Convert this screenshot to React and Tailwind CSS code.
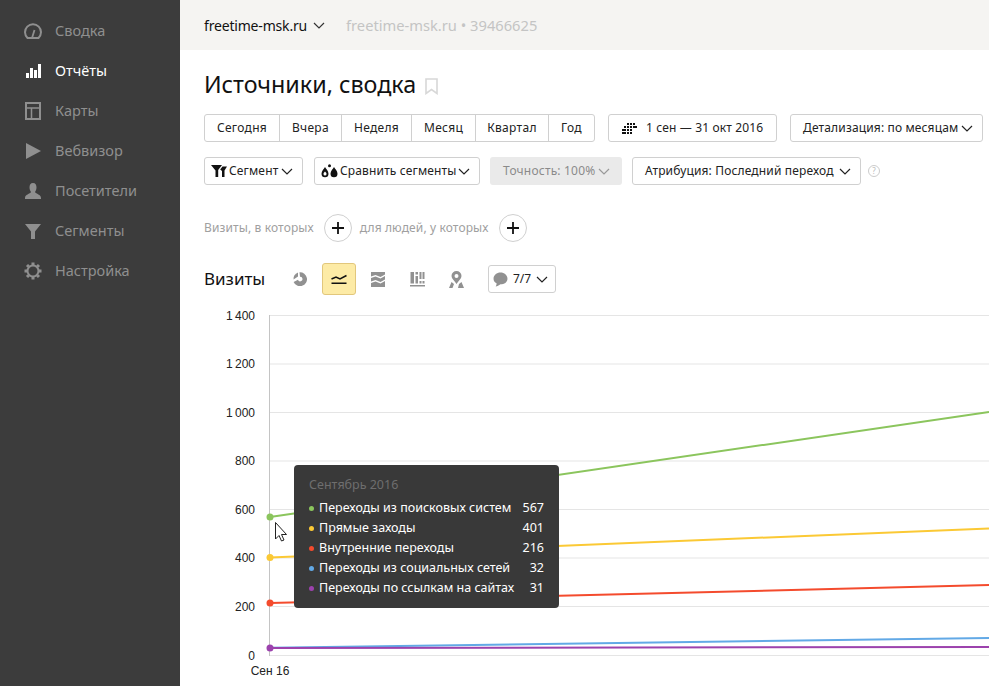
import React from "react";

const NAV = [
  { label: "Сводка", icon: "gauge" },
  { label: "Отчёты", icon: "bars", active: true },
  { label: "Карты", icon: "map" },
  { label: "Вебвизор", icon: "play" },
  { label: "Посетители", icon: "user" },
  { label: "Сегменты", icon: "funnel" },
  { label: "Настройка", icon: "gear" },
];

const PERIODS = [
  { label: "Сегодня", width: "w-[75px]" },
  { label: "Вчера", width: "w-[62px]" },
  { label: "Неделя", width: "w-[70px]" },
  { label: "Месяц", width: "w-[64px]" },
  { label: "Квартал", width: "w-[73px]" },
  { label: "Год", width: "w-[45px]" },
];

const ROWS = [
  { name: "Переходы из поисковых систем", value: 567, color: "bg-[#8bc55d]" },
  { name: "Прямые заходы", value: 401, color: "bg-[#fbc935]" },
  { name: "Внутренние переходы", value: 216, color: "bg-[#f44b2d]" },
  { name: "Переходы из социальных сетей", value: 32, color: "bg-[#62a9e6]" },
  { name: "Переходы по ссылкам на сайтах", value: 31, color: "bg-[#9c42ad]" },
];

const TICKS = [
  { label: "1\u2009400", y: 9.5 },
  { label: "1\u2009200", y: 58 },
  { label: "1\u2009000", y: 106.5 },
  { label: "800", y: 155 },
  { label: "600", y: 203.5 },
  { label: "400", y: 252 },
  { label: "200", y: 300.5 },
  { label: "0", y: 349.5 },
];

const NavIcon = ({ name }) => {
  const c = "currentColor";
  if (name === "gauge")
    return (
      <svg width="18" height="16" viewBox="0 0 18 16" fill="none">
        <path d="M3.500 15A8 8 0 1 1 14.500 15Z" stroke={c} strokeWidth="2" strokeLinejoin="round" />
        <path d="M8 15 L10.500 7" stroke={c} strokeWidth="1.800" />
      </svg>
    );
  if (name === "bars")
    return (
      <svg width="15" height="14" viewBox="0 0 15 14" fill={c}>
        <rect x="0" y="9" width="3" height="5" />
        <rect x="4" y="4" width="3" height="10" />
        <rect x="8" y="6" width="3" height="8" />
        <rect x="12" y="0" width="3" height="14" />
      </svg>
    );
  if (name === "map")
    return (
      <svg width="16" height="18" viewBox="0 0 16 18" fill="none" stroke={c} strokeWidth="2">
        <rect x="1" y="1" width="14" height="16" />
        <path d="M1 6 H15 M6.500 6 V17" strokeWidth="1.500" />
      </svg>
    );
  if (name === "play")
    return (
      <svg width="15" height="16" viewBox="0 0 15 16" fill={c}>
        <path d="M0 0 L15 8 L0 16 Z" />
      </svg>
    );
  if (name === "user")
    return (
      <svg width="16" height="16" viewBox="0 0 16 16" fill={c}>
        <path d="M8 0C10.500 0 11.500 2 11.500 4.500C11.500 6.500 10.500 8 10 9C11 11 16 11.500 16 15V16H0V15C0 11.500 5 11 6 9C5.500 8 4.500 6.500 4.500 4.500C4.500 2 5.500 0 8 0Z" />
      </svg>
    );
  if (name === "funnel")
    return (
      <svg width="16" height="15" viewBox="0 0 16 15" fill={c}>
        <path d="M0 0H16L10 7.500V15H6V7.500Z" />
      </svg>
    );
  return (
    <svg width="18" height="18" viewBox="0 0 18 18" fill="none" stroke={c}>
      <circle cx="9" cy="9" r="5.500" strokeWidth="2" />
      <path
        d="M9 0.500V3M9 15V17.500M0.500 9H3M15 9H17.500M3 3L4.800 4.800M13.200 13.200L15 15M15 3L13.200 4.800M4.800 13.200L3 15"
        strokeWidth="3"
      />
    </svg>
  );
};

const Chevron = ({ className = "text-[#222]" }) => (
  <svg className={className} width="12" height="7" viewBox="0 0 12 7" fill="none" stroke="currentColor" strokeWidth="1.200">
    <path d="M1 1 L6 6 L11 1" />
  </svg>
);

const Btn = ({ children, className = "" }) => (
  <div className={`h-7 flex items-center border border-[#d0d0d0] rounded-[3px] bg-white text-[#222] text-[12px] tracking-[0.15px] whitespace-nowrap ${className}`}>
    {children}
  </div>
);

const Plus = () => (
  <div className="w-7 h-7 rounded-full border border-[#d0d0d0] flex items-center justify-center shrink-0">
    <svg width="12" height="12" viewBox="0 0 12 12" stroke="#111" strokeWidth="1.800">
      <path d="M6 0V12M0 6H12" />
    </svg>
  </div>
);

const ChartIcon = ({ name }) => {
  if (name === "pie")
    return (
      <svg width="14" height="14" viewBox="0 0 14 14" fill="#919191">
        <path d="M6.500 0.200A7 7 0 1 1 0.600 10L5 7.700A2.300 2.300 0 1 0 7 4.800Z" />
        <path d="M5 0.500V4.500L0.500 7.500A7 7 0 0 1 5 0.500Z" />
      </svg>
    );
  if (name === "area")
    return (
      <svg width="14" height="15" viewBox="0 0 14 15" fill="#919191">
        <path d="M0 0H14V2.500L9.500 5L4.500 3L0 4.500Z" />
        <path d="M0 6L4.500 4.500L9.500 6.500L14 4V7.500L9.500 10L4.500 8L0 9.500Z" />
        <path d="M0 11L4.500 9.500L9.500 11.500L14 9V15H0Z" />
      </svg>
    );
  return (
    <svg width="15" height="15" viewBox="0 0 15 15" fill="#919191">
      <path d="M0.500 0H4V11.500H0.500ZM5.500 4H8V11.500H5.500ZM5.500 0H8V2.500H5.500ZM9.500 0H11.500V7H9.500ZM9.500 9H11.500V11.500H9.500ZM12.500 0H14.500V7H12.500ZM12.500 9H14.500V11.500H12.500ZM0 13H15V14.500H0Z" />
    </svg>
  );
};

const App = () => (
  <div className="flex w-[989px] h-[686px] overflow-hidden bg-white [font-family:'Liberation_Sans',sans-serif]">
    {/* Sidebar */}
    <aside className="w-[180px] shrink-0 bg-[#3c3c3c] pt-[11px] [font-family:'Open_Sans',sans-serif]">
      {NAV.map((item) => (
        <div
          key={item.label}
          className={`h-10 flex items-center text-[14.5px] ${item.active ? "text-white" : "text-[#8f8f8f]"}`}
        >
          <span className="w-[18px] ml-6 mr-[13px] flex justify-center shrink-0">
            <NavIcon name={item.icon} />
          </span>
          {item.label}
        </div>
      ))}
    </aside>

    <main className="flex-1 min-w-0">
      {/* Header */}
      <header className="h-[50px] bg-[#f5f4f2] flex items-center pl-6 text-[14px]">
        <span className="text-[#111] tracking-[-0.18px]">freetime-msk.ru</span>
        <Chevron className="ml-[6px] text-[#333]" />
        <span className="ml-[21px] text-[#c4c4c4] text-[14.7px]">freetime-msk.ru • 39466625</span>
      </header>

      <div className="pl-6">
        {/* Title */}
        <div className="h-[64px] flex items-center pt-[4px]">
          <h1 className="text-[23.3px] font-normal text-[#111]">Источники, сводка</h1>
          <svg className="ml-[9px] mt-[4px]" width="13" height="17" viewBox="0 0 13 17" fill="none" stroke="#d8d8d8" strokeWidth="1.600">
            <path d="M1 1H12V15.500L6.500 11.500L1 15.500Z" />
          </svg>
        </div>

        {/* Period row */}
        <div className="flex">
          <div className="flex h-7 border border-[#d0d0d0] rounded-[3px] text-[12px] tracking-[0.3px] text-[#222] divide-x divide-[#d0d0d0]">
            {PERIODS.map((p) => (
              <div key={p.label} className={`${p.width} flex items-center justify-center`}>{p.label}</div>
            ))}
          </div>
          <Btn className="ml-[13px] w-[169px] pl-[13px]">
            <svg width="15" height="11" viewBox="0 0 15 11" fill="#111">
              <path d="M5 0H7V2H5ZM8 0H10V2H8ZM11 0H13V2H11ZM2 3H4V5H2ZM5 3H7V5H5ZM8 3H10V5H8ZM11 3H13V5H11ZM13 3H15V5H13ZM0 6H2V8H0ZM2 6H4V8H2ZM5 6H7V8H5ZM8 6H10V8H8ZM0 9H2V11H0ZM2 9H4V11H2ZM5 9H7V11H5ZM8 9H10V11H8Z" />
            </svg>
            <span className="ml-[9px]">1 сен — 31 окт 2016</span>
          </Btn>
          <Btn className="ml-[13px] w-[193px] pl-[12px]">
            Детализация: по месяцам
            <Chevron className="ml-auto mr-[9px] text-[#222]" />
          </Btn>
        </div>

        {/* Segment row */}
        <div className="flex items-center mt-[15px]">
          <Btn className="w-[99px] pl-[6px]">
            <svg width="16" height="12" viewBox="0 0 16 12" fill="#111">
              <path d="M0 0H11L7.200 5V12H4.500V5.500ZM11.500 1.500H16L13.500 5.500V12H11V6L9.200 4.500Z" />
            </svg>
            <span className="ml-[2px]">Сегмент</span>
            <Chevron className="ml-auto mr-[9px]" />
          </Btn>
          <Btn className="ml-[11px] w-[166px] pl-[6px]">
            <svg width="17" height="14" viewBox="0 0 17 14" fill="#111">
              <path fillRule="evenodd" d="M4 3C5 5 7.500 7 7.500 9.700A3.500 3.500 0 0 1 0.500 9.700C0.500 7 3 5 4 3ZM4 7.500C3 8.500 2.500 9 2.500 10A1.500 1.500 0 0 0 5.500 10C5.500 9 5 8.500 4 7.500Z" />
              <path d="M13 3C14 5 16.500 7 16.500 9.700A3.500 3.500 0 0 1 9.500 9.700C9.500 7 12 5 13 3Z" />
              <circle cx="8.500" cy="1.700" r="1.500" />
            </svg>
            <span className="ml-[2px]">Сравнить сегменты</span>
            <Chevron className="ml-auto mr-[9px]" />
          </Btn>
          <div className="ml-[10px] w-[132px] h-7 flex items-center pl-[13px] rounded-[3px] bg-[#eaeaea] text-[#8a8a8a] text-[12px] tracking-[0.2px]">
            Точность: 100%
            <Chevron className="ml-auto mr-[12px] text-[#999]" />
          </div>
          <Btn className="ml-[10px] w-[229px] pl-[12px]">
            Атрибуция: Последний переход
            <Chevron className="ml-auto mr-[9px]" />
          </Btn>
          <div className="ml-[7px] w-3 h-3 rounded-full border border-[#ccc] flex items-center justify-center text-[8px] leading-none text-[#bbb]">?</div>
        </div>

        {/* Filters */}
        <div className="flex items-center mt-[29px] text-[12px] text-[#a0a0a0] tracking-[0.12px]">
          <span>Визиты, в которых</span>
          <span className="ml-[10px]"><Plus /></span>
          <span className="ml-2">для людей, у которых</span>
          <span className="ml-[10px]"><Plus /></span>
        </div>

        {/* Chart toolbar */}
        <div className="flex items-center mt-[21px] h-8">
          <span className="text-[17px] text-[#111] w-[87px]">Визиты</span>
          <span className="w-[18px] mr-[13px] flex justify-center"><ChartIcon name="pie" /></span>
          <div className="w-[34px] h-8 flex items-center justify-center bg-[#fdeba6] border border-[#e2c77c] rounded-[3px]">
            <svg width="16" height="10" viewBox="0 0 16 10" fill="none" stroke="#111" strokeWidth="1.500">
              <path d="M0.500 9.200H15.500M0.500 5L5 3L9 5L15.500 1.500" />
            </svg>
          </div>
          <span className="w-[44px] flex justify-center"><ChartIcon name="area" /></span>
          <span className="w-[34px] flex justify-center"><ChartIcon name="bars" /></span>
          <span className="w-[44px] flex justify-center">
            <svg width="15" height="17" viewBox="0 0 15 17" fill="#919191">
              <path d="M7.500 0A5 5 0 0 1 12.500 5C12.500 7.500 9.500 10 7.500 13C5.500 10 2.500 7.500 2.500 5A5 5 0 0 1 7.500 0ZM7.500 3A2 2 0 1 0 7.500 7A2 2 0 1 0 7.500 3Z" fillRule="evenodd" />
              <path d="M2.500 11L5 13L3.500 17H0ZM12.500 11L15 17H9L10 13Z" />
            </svg>
          </span>
          <Btn className="ml-[10px] w-[68px] pl-1 tracking-normal">
            <svg width="15" height="15" viewBox="0 0 14 14" fill="#919191">
              <path d="M7 0.500C10.500 0.500 13.500 3 13.500 6.200C13.500 9.400 10.500 11.500 7 11.500C5.500 12.500 4 13.500 2.500 13.500C3 12.800 3.400 11.500 3.300 10.500C1.500 9.500 0.500 8 0.500 6.200C0.500 3 3.500 0.500 7 0.500Z" />
            </svg>
            <span className="ml-[5px]">7/7</span>
            <Chevron className="ml-[5px]" />
          </Btn>
        </div>
      </div>

      {/* Chart */}
      <div className="relative mt-[11px]">
        <svg width="809" height="381" viewBox="0 0 809 381" className="block">
          {TICKS.map((t) => (
            <g key={t.label}>
              <line x1="89" x2="809" y1={t.y} y2={t.y} stroke="#e5e5e5" />
              <text x="75" y={t.y + 4} textAnchor="end" fontSize="12" fill="#222" fontFamily="Liberation Sans">
                {t.label}
              </text>
            </g>
          ))}
          <line x1="89.500" x2="89.500" y1="9" y2="350" stroke="#c4c4c4" />
          <path d="M90 211 L809 106" stroke="#8bc55d" strokeWidth="2" fill="none" />
          <path d="M90 251.500 L809 222.500" stroke="#fbc935" strokeWidth="2" fill="none" />
          <path d="M90 297 L809 279" stroke="#f44b2d" strokeWidth="2" fill="none" />
          <path d="M90 341.800 L809 332" stroke="#62a9e6" strokeWidth="2" fill="none" />
          <path d="M90 342 L809 341" stroke="#9c42ad" strokeWidth="2" fill="none" />
          <circle cx="90" cy="211" r="3.500" fill="#8bc55d" />
          <circle cx="90" cy="251.500" r="3.500" fill="#fbc935" />
          <circle cx="90" cy="297" r="3.500" fill="#f44b2d" />
          <circle cx="90" cy="342" r="3.500" fill="#9c42ad" />
          <text x="90" y="369" textAnchor="middle" fontSize="12" fill="#222" fontFamily="Liberation Sans">Сен 16</text>
          <path d="M95.500 216.500 V233 L99 229.500 L101.500 235 L104 234 L101.500 228.500 L106.500 228.500 Z" fill="#fff" stroke="#222" strokeWidth="1" />
        </svg>

        {/* Tooltip */}
        <div className="absolute left-[114px] top-[159px] w-[265px] h-[143px] rounded-[4px] bg-[#393939] pl-[15px] pr-[15px] pt-[10px] [font-family:'Open_Sans',sans-serif] text-[12.5px] text-white">
          <div className="text-[#6e6e6e] h-5 leading-5">Сентябрь 2016</div>
          <div className="pt-[3px]">
            {ROWS.map((r) => (
              <div key={r.name} className="flex items-center h-5 whitespace-nowrap">
                <span className={`w-[5px] h-[5px] rounded-full mr-[5px] shrink-0 ${r.color}`} />
                <span className="flex-1">{r.name}</span>
                <span>{r.value}</span>
              </div>
            ))}
          </div>
        </div>
      </div>
    </main>
  </div>
);

export default App;
